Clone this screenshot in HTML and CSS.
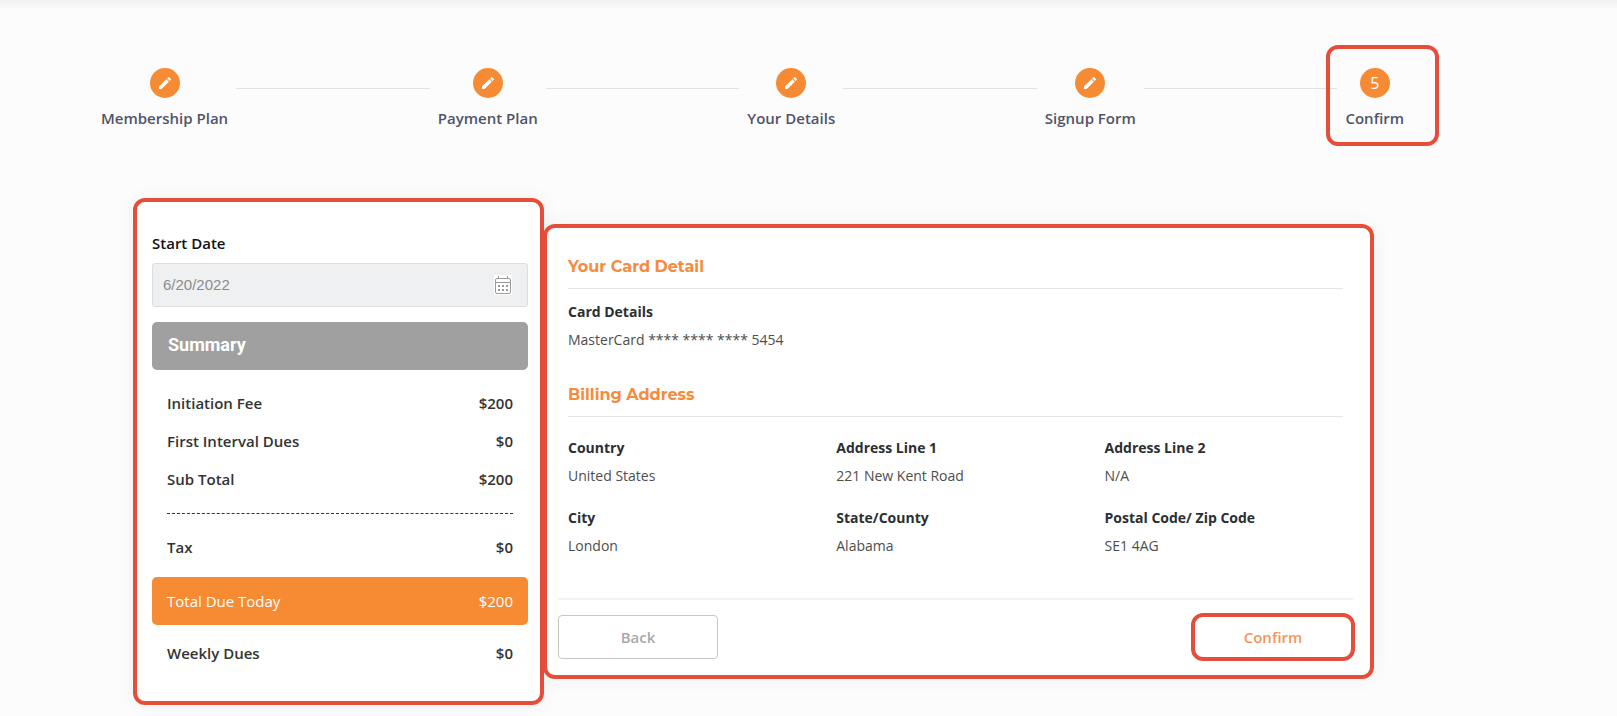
FILE: index.html
```html
<!DOCTYPE html>
<html lang="en">
<head>
<meta charset="utf-8">
<meta content="width=device-width,initial-scale=1" name="viewport">
<title>Signup - Confirm</title>
<link rel="stylesheet" href="styles.css">
</head>

<body>
<svg class="sprite" aria-hidden="true">
	<symbol id="pencil" viewBox="0 0 24 24">
		<path d="M3 17.25V21h3.75L17.81 9.94l-3.75-3.75L3 17.25zM20.71 7.04a1 1 0 0 0 0-1.41l-2.34-2.34a1 1 0 0 0-1.41 0l-1.83 1.83 3.75 3.75 1.83-1.83z"/>
	</symbol>
</svg>

<ol class="steps">
	<li class="step"><span class="step_icon"><svg><use href="#pencil"/></svg></span><span>Membership Plan</span></li>
	<li class="step_line" role="presentation"></li>
	<li class="step"><span class="step_icon"><svg><use href="#pencil"/></svg></span><span>Payment Plan</span></li>
	<li class="step_line" role="presentation"></li>
	<li class="step"><span class="step_icon"><svg><use href="#pencil"/></svg></span><span>Your Details</span></li>
	<li class="step_line" role="presentation"></li>
	<li class="step"><span class="step_icon"><svg><use href="#pencil"/></svg></span><span>Signup Form</span></li>
	<li class="step_line" role="presentation"></li>
	<li class="step step_current" aria-current="step"><span class="step_icon">5</span><span>Confirm</span></li>
</ol>

<main class="content">
	<section class="panel summary">
		<label class="date_label" for="startDate">Start Date</label>
		<div class="date_field">
			<input type="text" id="startDate" value="6/20/2022" disabled>
			<svg class="calendar" viewBox="0 0 18 20" aria-hidden="true">
				<rect class="calendar_bg" width="18" height="20"/>
				<rect class="calendar_line" x="1.5" y="3.5" width="15" height="15" rx="1.5"/>
				<path class="calendar_line" d="M1.5 7.5h15M4.5 1v3M13.5 1v3"/>
				<path class="calendar_dots" d="M4 11h2M8 11h2M12 11h2M4 15h2M8 15h2M12 15h2"/>
			</svg>
		</div>
		<h2 class="bar bar_title">Summary</h2>
		<dl class="rows">
			<div><dt>Initiation Fee</dt><dd>$200</dd></div>
			<div><dt>First Interval Dues</dt><dd>$0</dd></div>
			<div><dt>Sub Total</dt><dd>$200</dd></div>
			<div class="row_tax"><dt>Tax</dt><dd>$0</dd></div>
			<div class="bar bar_total"><dt>Total Due Today</dt><dd>$200</dd></div>
			<div class="row_weekly"><dt>Weekly Dues</dt><dd>$0</dd></div>
		</dl>
	</section>

	<section class="panel detail">
		<h3>Your Card Detail</h3>
		<dl class="fields fields_card">
			<div><dt>Card Details</dt><dd>MasterCard **** **** **** 5454</dd></div>
		</dl>
		<h3>Billing Address</h3>
		<dl class="fields fields_address">
			<div><dt>Country</dt><dd>United States</dd></div>
			<div><dt>Address Line 1</dt><dd>221 New Kent Road</dd></div>
			<div><dt>Address Line 2</dt><dd>N/A</dd></div>
			<div><dt>City</dt><dd>London</dd></div>
			<div><dt>State/County</dt><dd>Alabama</dd></div>
			<div><dt>Postal Code/ Zip Code</dt><dd>SE1 4AG</dd></div>
		</dl>
		<div class="actions">
			<button type="button" class="btn">Back</button>
			<button type="button" class="btn btn_confirm">Confirm</button>
		</div>
	</section>
</main>
</body>
</html>
```

FILE: styles.css
```css
*{box-sizing: border-box;}
body{margin: 0;background: #fcfcfc linear-gradient(#f1f1f1,#fcfcfc) 0 0/100% 10px no-repeat;font: 15px/20px "Open Sans",sans-serif;color: #222;}
h2,h3,dl,dd,ol{margin: 0;padding: 0;}
.sprite{display: none;}

/* steps */
.steps{display: flex;list-style: none;margin: 0 205px 0 93px;padding-top: 68px;color: #505468;font-weight: 600;}
.step{position: relative;display: flex;flex-direction: column;align-items: center;gap: 10px;padding: 0 8px;}
.step_icon{display: flex;align-items: center;justify-content: center;width: 30px;height: 30px;border-radius: 50%;background: #f68b34;color: #fff;font-size: 16px;font-weight: 400;}
.step_icon svg{width: 16px;height: 16px;fill: #fff;}
.step_line{flex: 1;height: 1px;margin-top: 20px;background: #e2e2e2;}
.step_current:after{content: "";position: absolute;inset: -23px -27px -18px -11px;border: 4px solid #e54e3a;border-radius: 12px;}

/* panels */
.content{display: grid;grid-template-columns: 411px 1fr;align-items: start;margin: 70px 243px 12px 133px;}
.panel{background: #fff;border: 4px solid #e54e3a;border-radius: 12px;box-shadow: 0 0 20px rgba(0,0,0,.05);}
.summary{padding: 31px 12px 29px 15px;font-weight: 600;color: #333;}
.detail{margin: 26px 0 0 -1px;padding: 29px 17px 14px 11px;}

.date_label{display: block;color: #111;margin-bottom: 10px;}
.date_field{display: flex;align-items: center;height: 44px;padding: 0 15px 0 10px;border: 1px solid #dadde1;border-radius: 3px;background: #eff0f2;margin-bottom: 15px;}
.date_field input{flex: 1;min-width: 0;padding: 0;border: 0;background: none;color: #8c8c8c;font: 15px/20px "Liberation Sans",Arial,sans-serif;}
.calendar{width: 18px;height: 20px;fill: none;stroke: #999;}
.calendar_bg{fill: #fff;stroke: none;}
.calendar_dots{stroke-width: 2;}

.bar{height: 48px;border-radius: 5px;color: #fff;}
.bar_title{padding: 0 16px;background: #a0a0a0;font: bold 18px/46px Roboto,sans-serif;}
.rows{padding-top: 14px;}
.rows div{display: flex;justify-content: space-between;align-items: center;height: 38px;margin: 0 15px;}
.rows .row_tax{height: 64px;border-top: 1px dashed #333;margin-top: 15px;padding-top: 3px;}
.rows .bar_total{height: 48px;margin: 0;padding: 0 15px;background: #f68b34;font-weight: 400;}
.rows .row_weekly{margin-top: 9px;}

h3{margin: 0 10px;padding-bottom: 11px;border-bottom: 1px solid #e6e6e6;color: #f68b3c;font: bold 16px/20px Montserrat,Inter,sans-serif;}
.fields{font-size: 14px;margin: 0 10px;}
.fields dt{font-weight: 700;color: #2b2f33;margin-bottom: 8px;}
.fields dd{color: #4d4d4d;}
.fields_card{padding: 13px 0 35px;}
.fields_address{display: grid;grid-template-columns: 9fr 9fr 8fr;row-gap: 22px;padding: 21px 0 42px;}
.actions{display: flex;justify-content: space-between;align-items: center;border-top: 2px solid #f2f2f2;padding-top: 13px;}
.btn{width: 160px;height: 44px;border: 1px solid #c6c6c6;border-radius: 4px;background: #fff;color: #a9a9a9;font: 600 15px/20px "Open Sans",sans-serif;}
.btn_confirm{width: 164px;height: 48px;margin-right: -2px;border: 4px solid #e54e3a;border-radius: 12px;color: #f6945a;}
```
